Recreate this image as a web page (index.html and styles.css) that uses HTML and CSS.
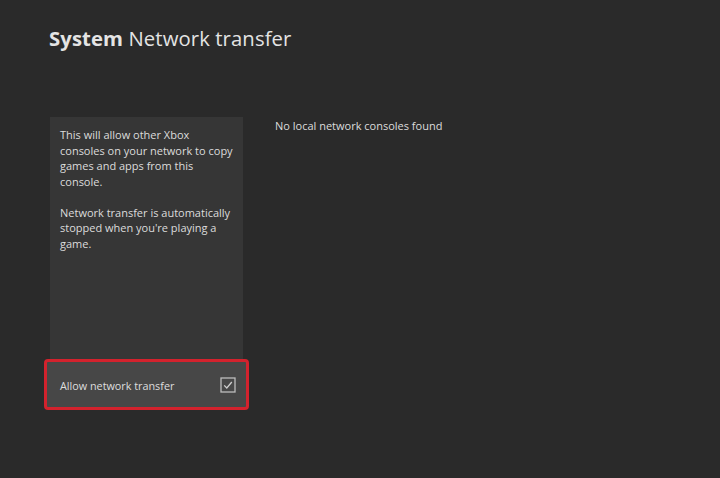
FILE: index.html
```html
<!DOCTYPE html>
<html>
<head>
<meta charset="utf-8">
<link rel="stylesheet" href="styles.css">
</head>
<body>
<div class="screen">
  <h1 class="title"><span class="strong">System</span> Network transfer</h1>
  <div class="content">
    <div class="left">
      <div class="panel">
        <p>This will allow other Xbox consoles on your network to copy games and apps from this console.</p>
        <p>Network transfer is automatically stopped when you're playing a game.</p>
      </div>
      <div class="option">
        <span>Allow network transfer</span>
        <span class="check">
          <svg width="16" height="16" viewBox="0 0 16 16"><rect x="1" y="1" width="14" height="14" fill="none" stroke="#bdbdbd" stroke-width="1.3"/><path d="M4.2 8.4 L6.8 11 L11.8 5" fill="none" stroke="#cfcfcf" stroke-width="1.3"/></svg>
        </span>
      </div>
    </div>
    <div class="right">No local network consoles found</div>
  </div>
</div>
</body>
</html>
```
FILE: styles.css
```css
html, body {
  margin: 0;
  padding: 0;
  background: #2a2a2a;
}
.screen {
  width: 720px;
  height: 478px;
  background: #2a2a2a;
  font-family: "Open Sans", "Noto Sans", sans-serif;
  color: #e6e6e6;
  box-sizing: border-box;
  padding: 24px 0 0 49px;
}
.title {
  margin: 0;
  font-size: 20.3px;
  font-weight: 400;
  line-height: 28px;
  color: #e4e4e4;
  letter-spacing: 0.1px;
}
.title .strong {
  font-weight: 700;
}
.content {
  display: flex;
  margin-top: 65px;
  gap: 32px;
}
.left {
  width: 193px;
  display: flex;
  flex-direction: column;
  margin-left: 1px;
}
.panel {
  background: #363636;
  height: 242px;
  box-sizing: border-box;
  padding: 10px 9px 0 10px;
}
.panel p {
  margin: 0 0 15.5px 0;
  font-size: 11px;
  line-height: 15.5px;
  color: #dcdcdc;
}
.option {
  margin: 0 -6px;
  height: 51px;
  box-sizing: border-box;
  border: 3px solid #d3222d;
  border-radius: 4px;
  background: #474747;
  display: flex;
  align-items: center;
  justify-content: space-between;
  padding: 1px 10px 0 13px;
  font-size: 10.8px;
  color: #dedede;
}
.check {
  display: flex;
}
.right {
  font-size: 11px;
  color: #dcdcdc;
  padding-top: 1px;
}
```
